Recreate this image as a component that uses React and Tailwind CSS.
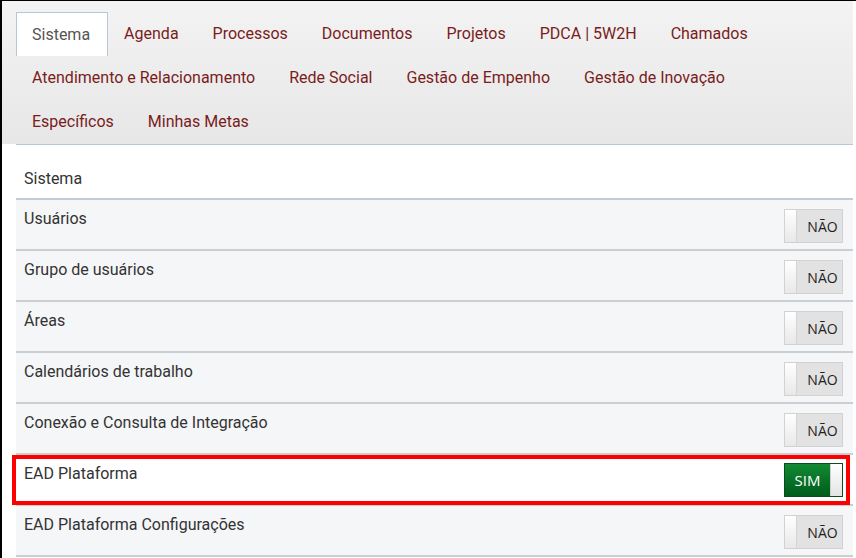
const tabRows = [
  ['Sistema', 'Agenda', 'Processos', 'Documentos', 'Projetos', 'PDCA | 5W2H', 'Chamados'],
  ['Atendimento e Relacionamento', 'Rede Social', 'Gestão de Empenho', 'Gestão de Inovação'],
  ['Específicos', 'Minhas Metas'],
]

const items = [
  { label: 'Usuários', on: false },
  { label: 'Grupo de usuários', on: false },
  { label: 'Áreas', on: false },
  { label: 'Calendários de trabalho', on: false },
  { label: 'Conexão e Consulta de Integração', on: false },
  { label: 'EAD Plataforma', on: true, highlight: true },
  { label: 'EAD Plataforma Configurações', on: false },
]

function Toggle({ on }) {
  if (on) {
    return (
      <div className="flex h-[34px] w-[59px] border border-[#0b4d1c] text-[15px] font-['Open_Sans',sans-serif]">
        <div className="flex flex-1 items-center justify-center bg-gradient-to-b from-[#138a32] to-[#005c1c] text-white">SIM</div>
        <div className="w-[12px] bg-gradient-to-b from-white to-[#e4e4e4] border-l border-[#cfcfcf]" />
      </div>
    )
  }
  return (
    <div className="flex h-[34px] w-[59px] border border-[#d2d2d2] text-[14px] font-['Open_Sans',sans-serif]">
      <div className="w-[12px] bg-gradient-to-b from-white to-[#e8e8e8] border-r border-[#d4d4d4]" />
      <div className="flex flex-1 items-center justify-center pl-[6px] bg-[#e2e2e2] text-[#222]">NÃO</div>
    </div>
  )
}

export default function App() {
  return (
    <div className="h-[558px] w-[856px] overflow-hidden bg-white border-t border-black border-l-2 font-['Roboto',sans-serif]">
      <div className="w-[851px] bg-gradient-to-b from-[#f3f3f3] to-[#e7e7e7] pl-[14px] pt-[11px]">
        <div className="flex flex-col">
          {tabRows.map((row, i) => (
            <div key={i} className="flex">
              {row.map((t) =>
                t === 'Sistema' ? (
                  <div key={t} className="h-[44px] border border-b-0 border-[#b7c7d7] bg-white pl-[15px] pr-[17px] pt-[10px] text-[16px] text-[#555]">
                    {t}
                  </div>
                ) : (
                  <div key={t} className="h-[44px] pl-[16px] pr-[18px] pt-[10px] text-[16px] text-[#7a1c1c]">
                    {t}
                  </div>
                )
              )}
            </div>
          ))}
        </div>
      </div>
      <div className="ml-[14px] w-[837px] h-[1px] bg-[#b7c7d7]" />
      <div className="ml-[14px] w-[837px] text-[16px] text-[#333]">
        <div className="h-[55px] pl-[8px] pt-[22px] bg-white border-b-2 border-[#c3cbd3]">Sistema</div>
        {items.map((it) => (
          <div
            key={it.label}
            className={
              'relative h-[51px] border-b-2 border-[#cbcfd3] flex justify-between pl-[8px] pr-[10px] pt-[7px] ' +
              (it.highlight ? 'bg-white' : 'bg-[#f5f6f8]')
            }
          >
            <span>{it.label}</span>
            <div className={it.highlight ? 'mt-[1px]' : 'mt-[2px]'}>
              <Toggle on={it.on} />
            </div>
            {it.highlight && (
              <div className="absolute left-[-4px] right-[3px] top-0 bottom-[-1px] border-[4px] border-[#ff0000] pointer-events-none" />
            )}
          </div>
        ))}
      </div>
    </div>
  )
}
